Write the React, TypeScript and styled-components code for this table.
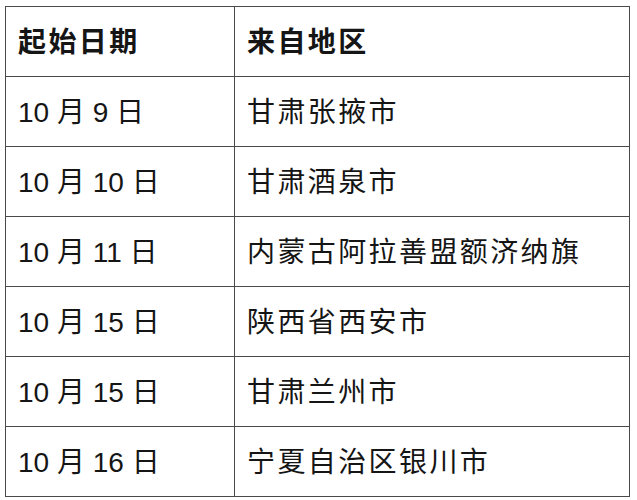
import styled, { createGlobalStyle } from 'styled-components'

const rows = [
  { date: '10 月 9 日', place: '甘肃张掖市' },
  { date: '10 月 10 日', place: '甘肃酒泉市' },
  { date: '10 月 11 日', place: '内蒙古阿拉善盟额济纳旗' },
  { date: '10 月 15 日', place: '陕西省西安市' },
  { date: '10 月 15 日', place: '甘肃兰州市' },
  { date: '10 月 16 日', place: '宁夏自治区银川市' },
]

const GlobalStyle = createGlobalStyle`
  body {
    margin: 0;
    background: #ffffff;
    font-family: "Liberation Sans", "Noto Sans CJK SC", sans-serif;
  }
`

const Page = styled.div`
  padding: 6px 8px 0 5px;
`

const Table = styled.table`
  width: 625px;
  border-collapse: collapse;
  color: #151515;
`

const Row = styled.tr`
  height: 70px;
`

const Cell = styled.td<{ $head?: boolean; $wide?: boolean }>`
  border: 1.5px solid #4a4a4a;
  padding: 0 0 4px 12px;
  font-size: 28px;
  font-weight: ${(p) => (p.$head ? 700 : 400)};
  letter-spacing: ${(p) => (p.$wide ? '2.4px' : '0')};
  vertical-align: middle;
  white-space: nowrap;

  &:first-child {
    width: 216px;
  }
`

const App = () => {
  return (
    <Page>
      <GlobalStyle />
      <Table>
        <tbody>
          <Row>
            <Cell $head $wide>起始日期</Cell>
            <Cell $head $wide>来自地区</Cell>
          </Row>
          {rows.map((row, i) => (
            <Row key={i}>
              <Cell>{row.date}</Cell>
              <Cell $wide>{row.place}</Cell>
            </Row>
          ))}
        </tbody>
      </Table>
    </Page>
  )
}

export default App
